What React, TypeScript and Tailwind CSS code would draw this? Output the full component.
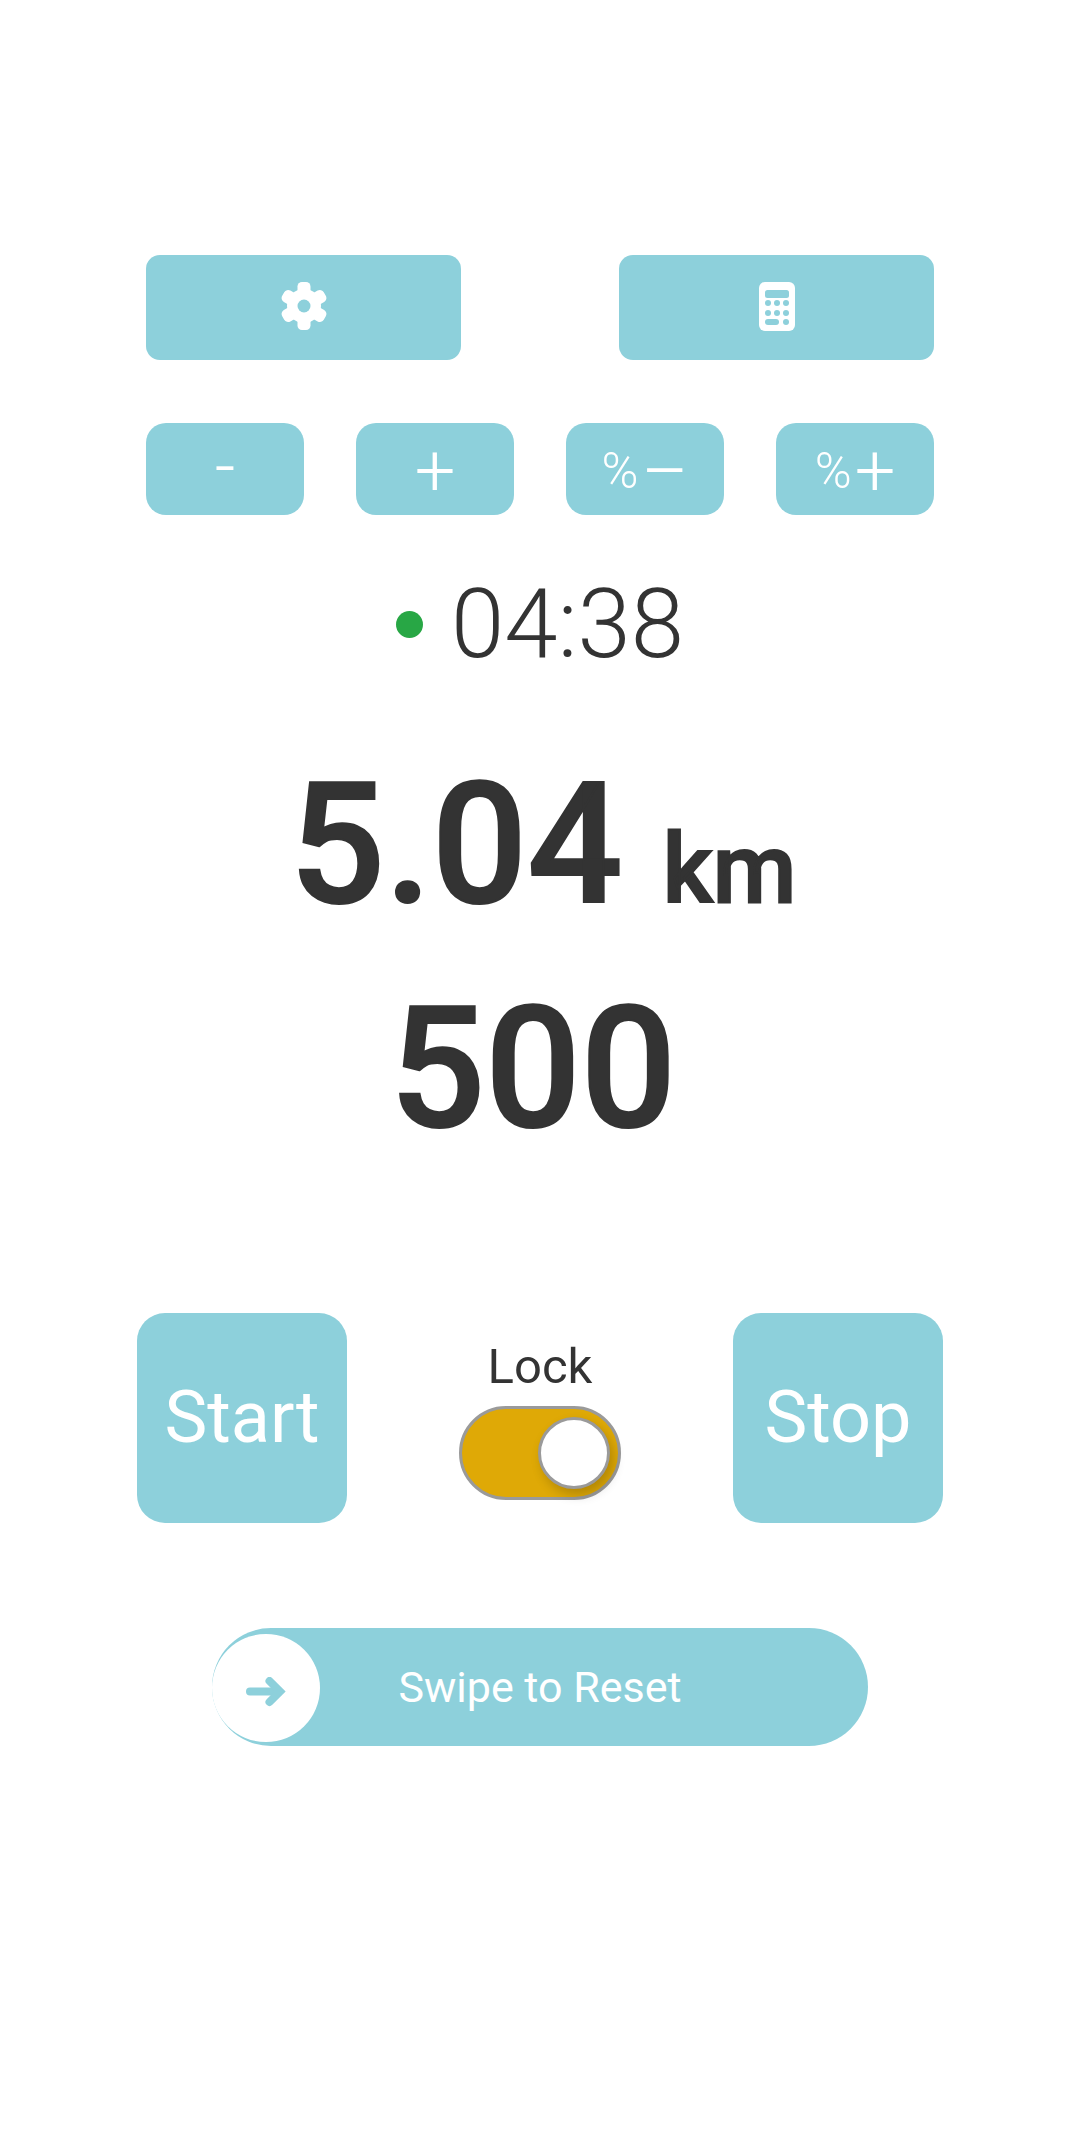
const teal = 'bg-[#8dd0db]';

function SmallButton({ label, glyph, glyphClass }: { label?: string; glyph: string; glyphClass?: string }) {
    return (
        <button className={`${teal} h-[92px] w-[158px] rounded-[20px] flex items-baseline justify-center text-white font-light text-[72px] leading-[88px]`}>
            {label && <span className="text-[50px] mr-[3px] -translate-y-[3px]">{label}</span>}
            <span className={glyphClass}>{glyph}</span>
        </button>
    );
}

function GearIcon() {
    return (
        <svg className="mb-[3px]" width="48" height="48" viewBox="0 0 48 48">
            {[0, 60, 120].map(deg => (
                <rect key={deg} x="17.5" y="0" width="13" height="48" rx="4.5" fill="#fff" transform={`rotate(${deg} 24 24)`} />
            ))}
            <circle cx="24" cy="24" r="17" fill="#fff" />
            <circle cx="24" cy="24" r="6.5" fill="#8dd0db" />
        </svg>
    );
}

function CalculatorIcon() {
    return (
        <svg className="mb-[3px]" width="36" height="49" viewBox="0 0 36 49">
            <rect width="36" height="49" rx="6" fill="#fff" />
            <rect x="6" y="8" width="24" height="8" rx="2.5" fill="#8dd0db" />
            {[21, 31].map(y =>
                [9, 18, 27].map(x => <circle key={`${x}-${y}`} cx={x} cy={y} r="3" fill="#8dd0db" />),
            )}
            <rect x="6" y="37" width="14" height="6" rx="3" fill="#8dd0db" />
            <circle cx="27" cy="40" r="3" fill="#8dd0db" />
        </svg>
    );
}

export default function App() {
    return (
        <div className="w-[1080px] h-[2150px] bg-white text-[#333333] font-['Roboto',sans-serif] overflow-hidden pt-[255px]">
            <div className="pl-[146px] pr-[146px] flex justify-between">
                <button className={`${teal} h-[105px] w-[315px] rounded-[14px] flex items-center justify-center`}>
                    <GearIcon />
                </button>
                <button className={`${teal} h-[105px] w-[315px] rounded-[14px] flex items-center justify-center`}>
                    <CalculatorIcon />
                </button>
            </div>

            <div className="pl-[146px] pr-[146px] mt-[63px] flex justify-between">
                <SmallButton glyph="-" />
                <SmallButton glyph="+" glyphClass="translate-y-[4px]" />
                <SmallButton label="%" glyph="–" glyphClass="translate-y-[5px]" />
                <SmallButton label="%" glyph="+" glyphClass="translate-y-[4px]" />
            </div>

            <div className="mt-[54px] flex items-center justify-center h-[110px] gap-[28px]">
                <span className="w-[27px] h-[27px] rounded-full bg-[#28a745]" />
                <span className="text-[96px] font-light leading-none">04:38</span>
            </div>

            <div className="mt-[82px] pl-[6px] flex items-baseline justify-center font-medium leading-none h-[170px] [-webkit-text-stroke:2px_#333333]">
                <span className="text-[168px]">5.04</span>
                <span className="text-[96px] ml-[40px]">km</span>
            </div>

            <div className="mt-[54px] pr-[14px] text-center font-medium text-[168px] leading-none [-webkit-text-stroke:2px_#333333]">500</div>

            <div className="mt-[160px] px-[137px] flex justify-between items-start">
                <button className={`${teal} w-[210px] h-[210px] rounded-[28px] text-white text-[72px]`}>Start</button>
                <div className="pt-[29px] flex flex-col items-center">
                    <span className="text-[49px] leading-none">Lock</span>
                    <div className="mt-[15px] w-[162px] h-[94px] rounded-full bg-[#dfa906] border-[3px] border-[#9a9a9a] flex items-center justify-end pr-[8px]">
                        <div className="w-[72px] h-[72px] rounded-full bg-white border-[3px] border-[#9a9a9a] shadow-[4px_6px_12px_rgba(0,0,0,0.2)]" />
                    </div>
                </div>
                <button className={`${teal} w-[210px] h-[210px] rounded-[28px] text-white text-[72px]`}>Stop</button>
            </div>

            <div className="mt-[105px] flex justify-center">
                <div className={`${teal} relative w-[656px] h-[118px] rounded-full flex items-center justify-center text-white text-[43px]`}>
                    <div className="absolute left-0 top-[6px] w-[108px] h-[108px] rounded-full bg-white flex items-center justify-center">
                        <svg className="mt-[8px]" width="40" height="30" viewBox="0 0 40 30" fill="none" stroke="#8dd0db" strokeLinecap="round">
                            <path d="M4 14.5H28" strokeWidth="8" />
                            <path d="M23.5 4L34 14.5L23.5 25" strokeWidth="8" strokeLinejoin="miter" />
                        </svg>
                    </div>
                    Swipe to Reset
                </div>
            </div>
        </div>
    );
}
